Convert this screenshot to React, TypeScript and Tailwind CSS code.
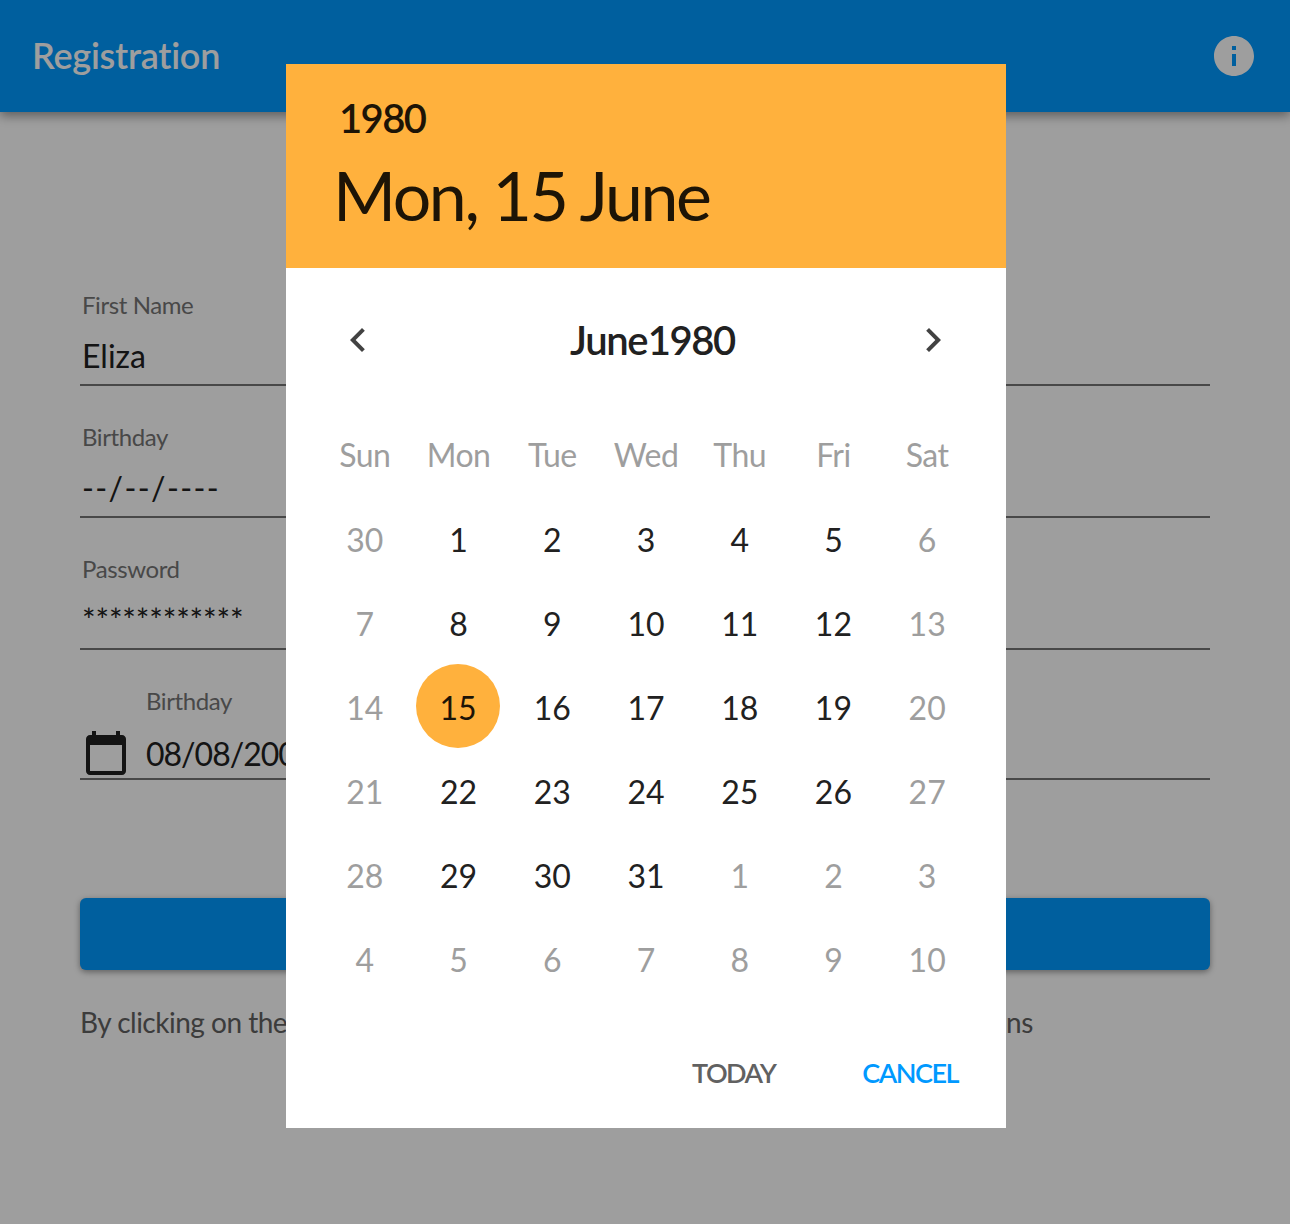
import { MdCalendarToday, MdChevronLeft, MdChevronRight, MdInfo } from "react-icons/md";

const weekDays = ["Sun", "Mon", "Tue", "Wed", "Thu", "Fri", "Sat"];

// [day, belongs to the current month]
const days: [number, boolean][] = [
  [30, false], [1, true], [2, true], [3, true], [4, true], [5, true], [6, false],
  [7, false], [8, true], [9, true], [10, true], [11, true], [12, true], [13, false],
  [14, false], [15, true], [16, true], [17, true], [18, true], [19, true], [20, false],
  [21, false], [22, true], [23, true], [24, true], [25, true], [26, true], [27, false],
  [28, false], [29, true], [30, true], [31, true], [1, false], [2, false], [3, false],
  [4, false], [5, false], [6, false], [7, false], [8, false], [9, false], [10, false],
];

const Field = ({ label, value, valueClass }: { label: string; value: string; valueClass?: string }) => (
  <div className="h-[132px] border-b-2 border-[#757575] px-0.5 flex flex-col justify-end">
    <label className="text-[24px] leading-[32px] tracking-[-0.4px] text-[#757575] mb-[15px]">{label}</label>
    <div className={"text-[32px] leading-[40px] h-[41px] mb-[7px] text-[#212121] " + (valueClass ?? "")}>
      {value}
    </div>
  </div>
);

export default function App() {
  return (
    <div className="relative h-[1224px] w-[1290px] overflow-hidden bg-white font-['Lato',sans-serif]">
      {/* toolbar */}
      <header className="h-[112px] bg-[#0099ff] flex items-center justify-between pl-[32px] pr-[32px] shadow-[0_4px_10px_rgba(0,0,0,0.4)]">
        <h1 className="text-[36px] leading-[40px] mb-[2px] font-semibold tracking-[-0.25px] text-white">Registration</h1>
        <MdInfo size={48} color="#ffffff" />
      </header>

      <main className="px-[80px] pt-[142px]">
        <Field label="First Name" value="Eliza" />
        <Field label="Birthday" value="--/--/----" valueClass="tracking-[1.4px]" />
        <Field label="Password" value="************" valueClass="tracking-[-0.15px]" />
        <div className="h-[130px] border-b-2 border-[#757575] flex items-end">
          <MdCalendarToday size={48} color="#212121" className="ml-0.5 mb-[1px]" />
          <div className="ml-4 flex flex-col">
            <label className="text-[24px] leading-[32px] tracking-[-0.4px] text-[#757575] mb-[17px]">Birthday</label>
            <div className="text-[32px] leading-[40px] h-[41px] tracking-[-1px] text-[#212121] mb-[3px]">08/08/2000</div>
          </div>
        </div>
        <button className="mt-[118px] h-[72px] w-full rounded-md bg-[#0099ff] shadow-[0_2px_6px_rgba(0,0,0,0.4)]" />
        <p className="mt-[32px] -translate-y-[7px] text-[28px] leading-[42px] tracking-[-0.5px] text-[#616161]">
          By clicking on the register button below, you agree with our terms and conditions
        </p>
      </main>

      {/* dim layer */}
      <div className="absolute inset-0 bg-[rgba(0,0,0,0.38)]" />

      {/* date picker */}
      <div className="absolute left-[286px] top-[64px] w-[720px] h-[1064px] bg-white">
        <div className="h-[204px] bg-[#ffb13d] text-[#1d1406] pl-[47px] flex flex-col">
          <div className="pl-[6px] pt-[29px] text-[40px] leading-[50px] tracking-[-1.6px] font-semibold">1980</div>
          <div className="mt-[7px] text-[68px] leading-[90px] tracking-[-2.4px]">Mon, 15 June</div>
        </div>

        <div className="h-[144px] flex items-center justify-between pl-[48px] pr-[49px]">
          <MdChevronLeft size={48} color="#424242" />
          <div className="text-[40px] font-semibold tracking-[-1.4px] [word-spacing:-8px] text-[#212121] ml-[14px]">June 1980</div>
          <MdChevronRight size={48} color="#424242" />
        </div>

        <div className="px-[32px]">
          <div className="grid grid-cols-7 h-[86px] items-center text-center text-[32px] tracking-[-0.5px] text-[#9e9e9e]">
            {weekDays.map((d) => (
              <div key={d}>{d}</div>
            ))}
          </div>
          <div className="grid grid-cols-7 auto-rows-[84px] text-[32px]">
            {days.map(([d, current], i) => (
              <div key={i} className="flex items-center justify-center">
                {current && d === 15 ? (
                  <span className="flex size-[84px] shrink-0 -mt-1 -ml-[1px] pt-1 items-center justify-center rounded-full bg-[#ffb13d] text-[#1d1406]">{d}</span>
                ) : (
                  <span className={current ? "text-[#212121]" : "text-[#9e9e9e]"}>{d}</span>
                )}
              </div>
            ))}
          </div>
        </div>

        <div className="flex justify-end items-center h-[126px] pt-[16px] pr-[48px] gap-[87px] text-[27px] font-semibold tracking-[-1.5px]">
          <button className="text-[#616161]">TODAY</button>
          <button className="text-[#0099ff]">CANCEL</button>
        </div>
      </div>
    </div>
  );
}
